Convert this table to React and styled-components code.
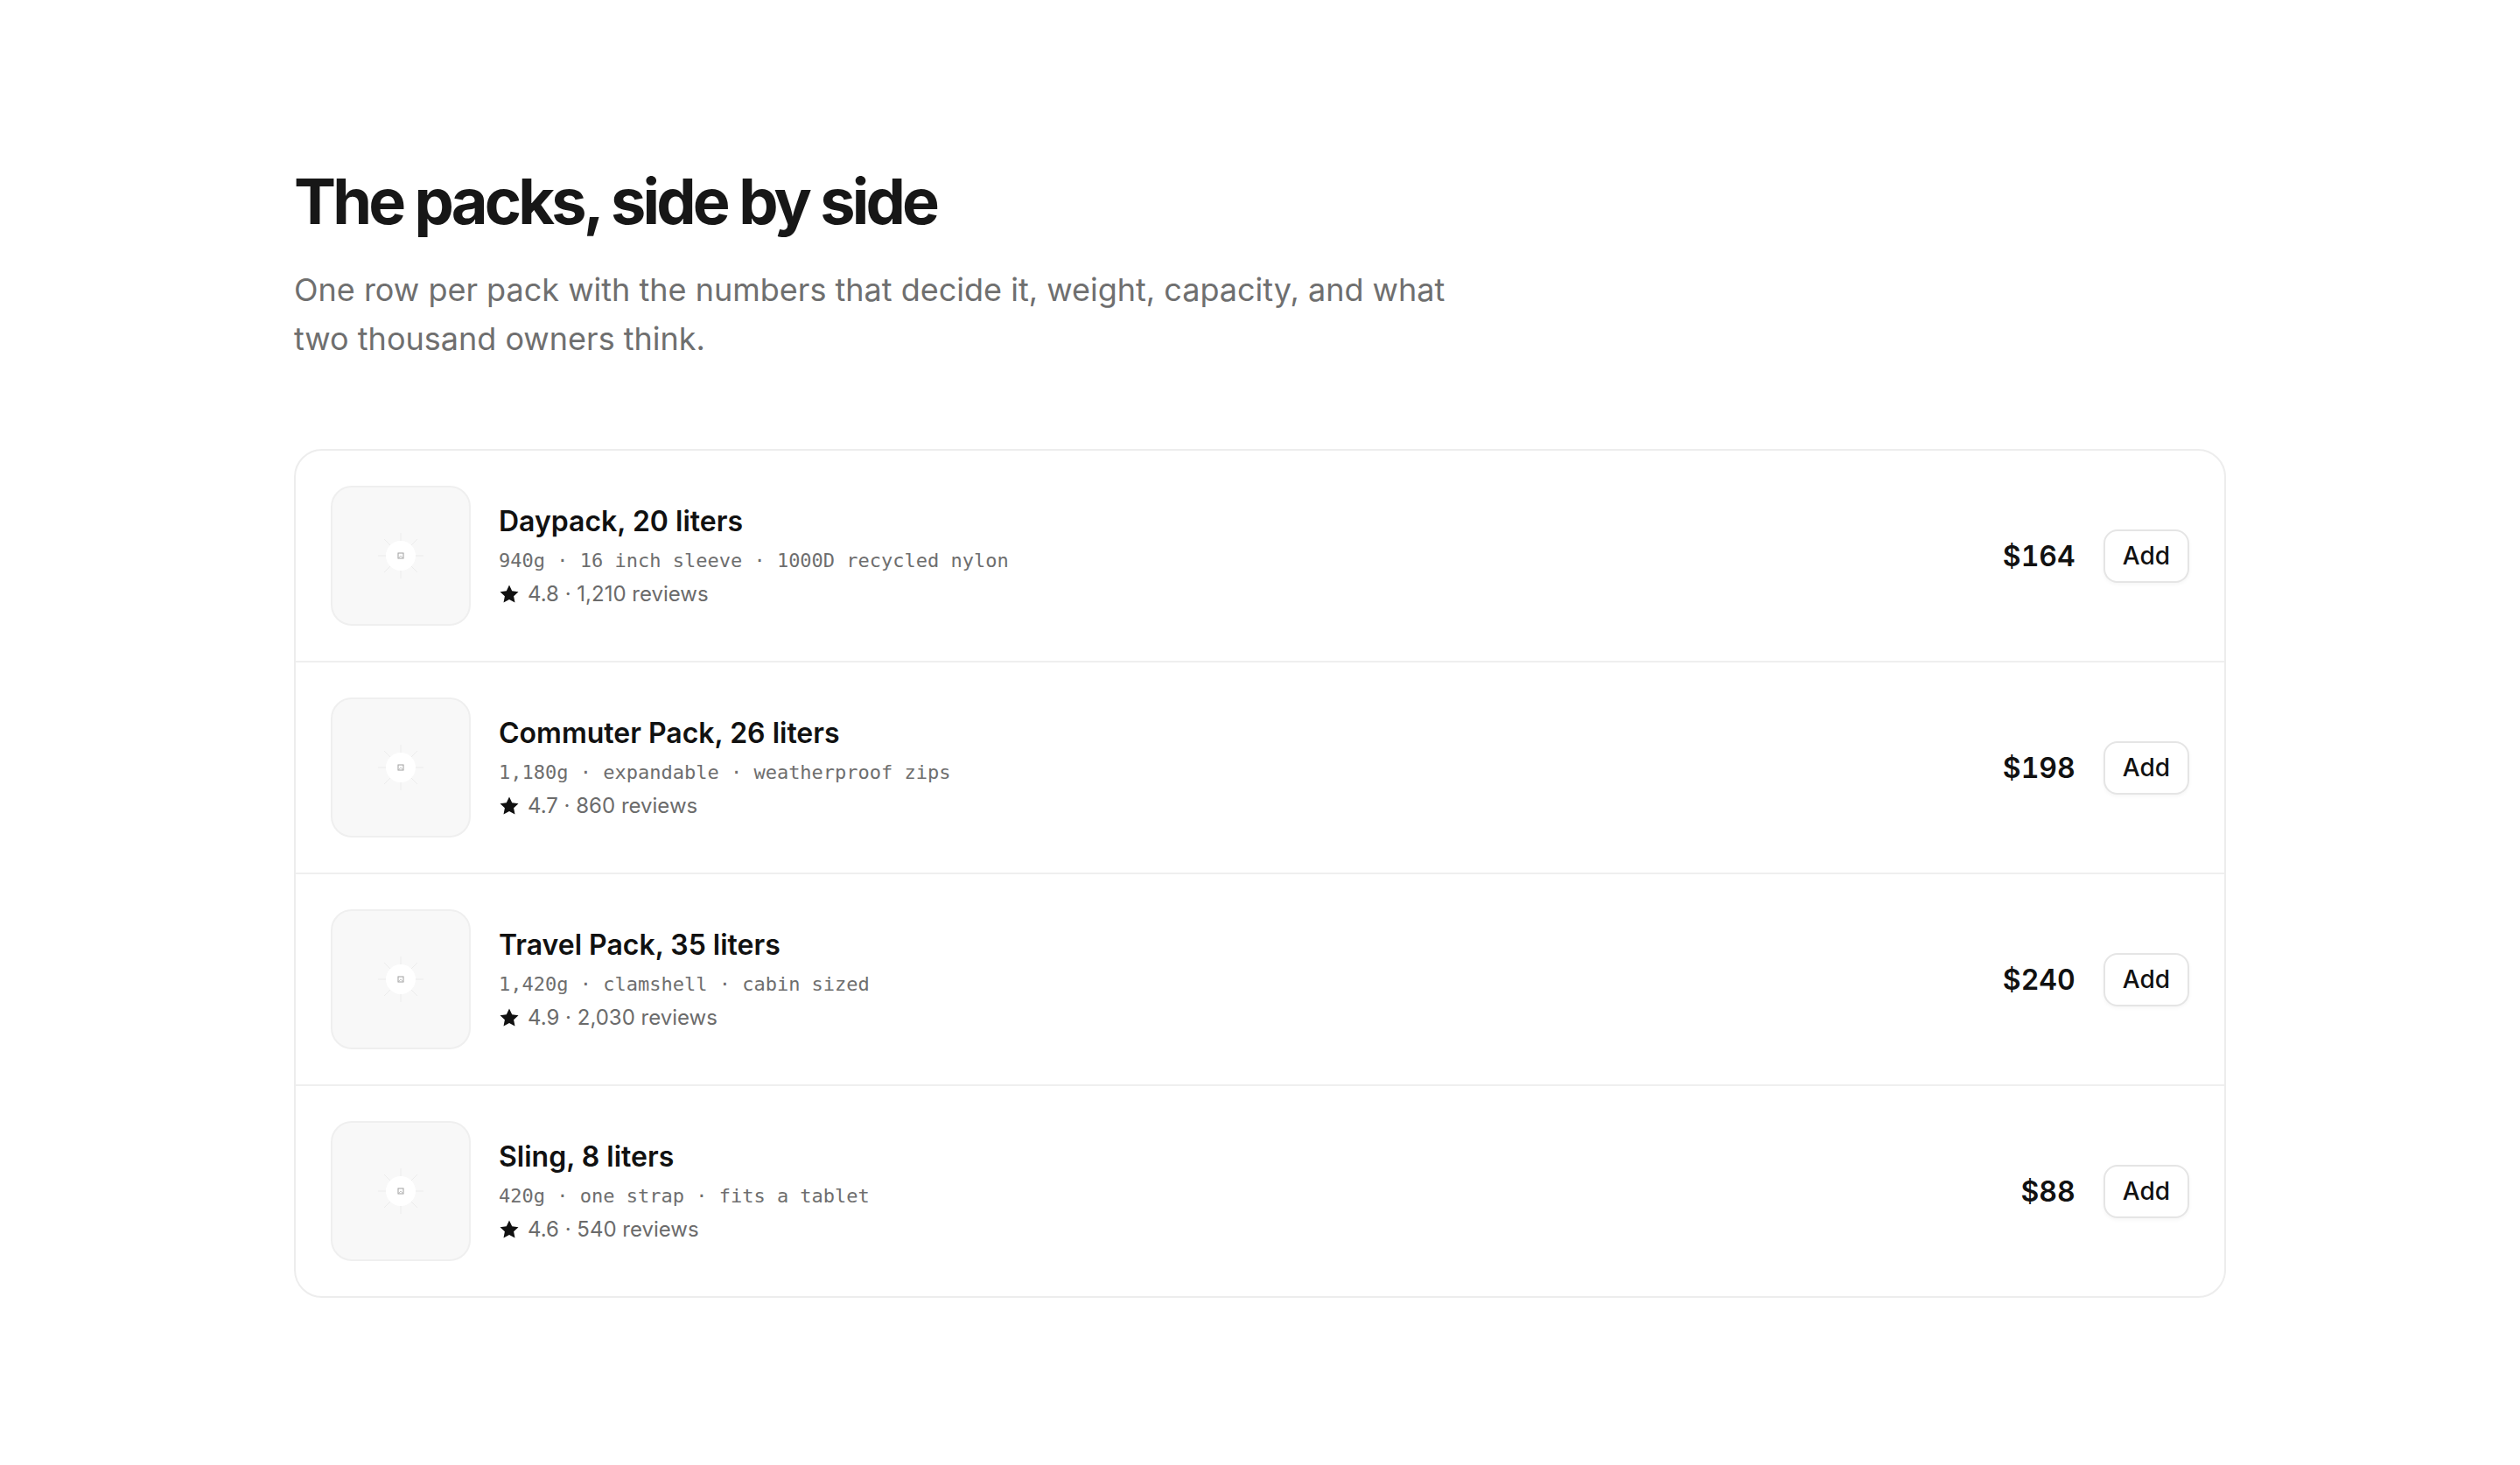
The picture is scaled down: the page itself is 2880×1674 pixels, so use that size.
import React from "react";
import styled, { createGlobalStyle } from "styled-components";

const Global = createGlobalStyle`
  html, body { margin: 0; padding: 0; background: #ffffff; }
  body { font-family: Inter, "Noto Sans", sans-serif; color: #171717; -webkit-font-smoothing: antialiased; }
  * { box-sizing: border-box; }
`;

const Page = styled.main`
  max-width: 2208px;
  margin: 0 auto;
  padding: 190px 0 160px;
`;

const Heading = styled.h1`
  margin: 0;
  font-size: 72px;
  line-height: 79px;
  font-weight: 700;
  letter-spacing: -0.053em;
  color: #171717;
`;

const Lead = styled.p`
  margin: 34px 0 0;
  max-width: 1344px;
  font-size: 36px;
  line-height: 56px;
  color: #6f6f6f;
`;

const Card = styled.section`
  margin-top: 98px;
  border: 2px solid #ededed;
  border-radius: 32px;
  background: #ffffff;
  overflow: hidden;
`;

const Row = styled.div`
  display: flex;
  align-items: center;
  gap: 32px;
  padding: 40px;
  border-top: ${(p) => (p.$first ? "none" : "2px solid #efefef")};
`;

const Thumb = styled.div`
  flex: 0 0 160px;
  width: 160px;
  height: 160px;
  border: 2px solid #efefef;
  border-radius: 24px;
  background: #f8f8f8;
  display: flex;
  align-items: center;
  justify-content: center;
`;

const Info = styled.div`
  flex: 1;
  display: flex;
  flex-direction: column;
  padding-top: 2px;
`;

const Name = styled.div`
  font-size: 32px;
  line-height: 42px;
  font-weight: 600;
  color: #111111;
`;

const Specs = styled.div`
  margin-top: 6px;
  font-family: "DejaVu Sans Mono", monospace;
  font-size: 22px;
  line-height: 36px;
  color: #6e6e6e;
`;

const Rating = styled.div`
  margin-top: 2px;
  display: flex;
  align-items: center;
  gap: 9px;
  font-size: 24px;
  line-height: 36px;
  color: #6b6b6b;
`;

const Price = styled.div`
  font-size: 32px;
  font-weight: 600;
  font-variant-numeric: tabular-nums;
  color: #111111;
`;

const AddButton = styled.button`
  font-family: Inter, "Noto Sans", sans-serif;
  font-size: 28px;
  font-weight: 500;
  line-height: 33px;
  padding: 12px 20px;
  border: 2px solid #e5e5e5;
  border-radius: 16px;
  background: #ffffff;
  color: #111111;
  box-shadow: 0 2px 4px rgba(0, 0, 0, 0.04);
  cursor: pointer;
`;

const Placeholder = () => (
  <svg width="60" height="60" viewBox="0 0 60 60">
    <g stroke="#ececec" strokeWidth="1">
      <line x1="30" y1="4" x2="30" y2="56" />
      <line x1="4" y1="30" x2="56" y2="30" />
      <line x1="11" y1="11" x2="49" y2="49" />
      <line x1="49" y1="11" x2="11" y2="49" />
    </g>
    <circle cx="30" cy="30" r="17" fill="#ffffff" />
    <rect x="27" y="27" width="6" height="6" fill="none" stroke="#a0a0a0" strokeWidth="1" />
    <path d="M27.5 32.5 L30 30 L32.5 32.5" fill="none" stroke="#b8b8b8" strokeWidth="0.8" />
  </svg>
);

const Star = () => (
  <svg width="24" height="24" viewBox="0 0 24 24">
    <path
      d="M12 1.5l3.2 6.7 7.3 1-5.4 5.1 1.4 7.3L12 18l-6.5 3.6 1.4-7.3L1.5 9.2l7.3-1z"
      fill="#111111"
    />
  </svg>
);

const packs = [
  { name: "Daypack, 20 liters", specs: "940g · 16 inch sleeve · 1000D recycled nylon", rating: "4.8 · 1,210 reviews", price: "$164" },
  { name: "Commuter Pack, 26 liters", specs: "1,180g · expandable · weatherproof zips", rating: "4.7 · 860 reviews", price: "$198" },
  { name: "Travel Pack, 35 liters", specs: "1,420g · clamshell · cabin sized", rating: "4.9 · 2,030 reviews", price: "$240" },
  { name: "Sling, 8 liters", specs: "420g · one strap · fits a tablet", rating: "4.6 · 540 reviews", price: "$88" },
];

export default function App() {
  return (
    <>
      <Global />
      <Page>
        <Heading>The packs, side by side</Heading>
        <Lead>
          One row per pack with the numbers that decide it, weight, capacity, and what two thousand owners think.
        </Lead>
        <Card>
          {packs.map((p, i) => (
            <Row key={p.name} $first={i === 0}>
              <Thumb>
                <Placeholder />
              </Thumb>
              <Info>
                <Name>{p.name}</Name>
                <Specs>{p.specs}</Specs>
                <Rating>
                  <Star />
                  <span>{p.rating}</span>
                </Rating>
              </Info>
              <Price>{p.price}</Price>
              <AddButton>Add</AddButton>
            </Row>
          ))}
        </Card>
      </Page>
    </>
  );
}
